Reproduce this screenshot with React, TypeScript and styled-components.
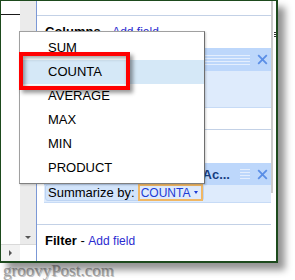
import React from "react";
import styled, { createGlobalStyle } from "styled-components";

const Global = createGlobalStyle`
  html, body { margin: 0; padding: 0; background: #fff; }
  body { font-family: "Liberation Sans", Arial, sans-serif; }
  * { box-sizing: border-box; }
`;

const Page = styled.div`
  width: 295px;
  height: 280px;
  overflow: hidden;
  background: #fff;
`;

const Window = styled.div`
  position: relative;
  width: 278px;
  height: 263px;
  border-style: solid;
  border-color: #1d4a1d;
  border-width: 1px 2px 2px 1px;
  background: #fff;
  box-shadow: 7px 7px 7px rgba(0, 0, 0, 0.42);
  display: flex;
`;

const SheetArea = styled.div`
  width: 35px;
  flex: none;
  display: flex;
  flex-direction: column;
`;

const SheetTop = styled.div`
  flex: 1;
  display: flex;
`;

const CellCol = styled.div`
  width: 19px;
  display: flex;
  flex-direction: column;
`;

const Cell = styled.div`
  height: 14px;
  border-bottom: 1px solid #1a1a1a;
`;

const VScroll = styled.div`
  width: 16px;
  background: #ebebeb;
  display: flex;
  flex-direction: column;
  justify-content: flex-end;
  align-items: center;
  padding-bottom: 5px;
`;

const DownArrow = styled.div`
  width: 0;
  height: 0;
  border-left: 3px solid transparent;
  border-right: 3px solid transparent;
  border-top: 3px solid #555;
`;

const SheetBottom = styled.div`
  height: 17px;
  border-top: 1px solid #d9d9d9;
  display: flex;
`;

const HButton = styled.div`
  width: 19px;
  background: #f2f2f2;
  display: flex;
  align-items: center;
  justify-content: center;
`;

const RightArrow = styled.div`
  width: 0;
  height: 0;
  border-top: 3px solid transparent;
  border-bottom: 3px solid transparent;
  border-left: 3px solid #555;
`;

const Corner = styled.div`
  width: 16px;
  background: #fff;
`;

const Panel = styled.div`
  width: 235px;
  flex: none;
  border-left: 1px solid #7b98d6;
  display: flex;
  flex-direction: column;
`;

const TopStrip = styled.div`
  height: 15px;
  border-bottom: 1px solid #c3d1e6;
`;

const Section = styled.div<{ $top: number; $last?: boolean }>`
  padding: ${(p) => p.$top}px 0 ${(p) => (p.$last ? 0 : 21)}px 0;
  border-bottom: ${(p) => (p.$last ? "none" : "1px solid #c3d1e6")};
`;

const SectionHeader = styled.div`
  height: 16px;
  line-height: 16px;
  padding-left: 8px;
  font-size: 13px;
  color: #000;
  white-space: nowrap;
`;

const Bold = styled.span`
  font-weight: bold;
`;

const AddField = styled.span`
  font-size: 12px;
  color: #2b2bd0;
`;

const Card = styled.div<{ $gap: number }>`
  margin: ${(p) => p.$gap}px 0 0 7px;
  display: flex;
  flex-direction: column;
`;

const CardHeader = styled.div<{ $h: number }>`
  height: ${(p) => p.$h}px;
  background: #bdd7fb;
  display: flex;
  align-items: center;
`;

const CardTitle = styled.div`
  flex: 1;
  min-width: 0;
  overflow: hidden;
  white-space: nowrap;
  text-align: right;
  padding-right: 10px;
  font-size: 13px;
  font-weight: bold;
  color: #163d80;
`;

const Grip = styled.div<{ $w: number }>`
  width: ${(p) => p.$w}px;
  flex: none;
  height: 10px;
  background: repeating-linear-gradient(
    to bottom,
    #e4eefd 0px,
    #e4eefd 1px,
    transparent 1px,
    transparent 3px
  );
`;

const CloseBtn = styled.svg`
  flex: none;
  width: 11px;
  height: 11px;
  margin: 0 3px 0 7px;
`;

const CardBody = styled.div<{ $h: number }>`
  height: ${(p) => p.$h}px;
  background: #deebfc;
  border-bottom: 1px solid #c7dbf6;
  display: flex;
  align-items: flex-start;
`;

const Pill = styled.div`
  margin-left: 1px;
  margin-top: -1px;
  height: 17px;
  display: flex;
  align-items: center;
  padding-left: 2px;
  background: #d2e4fb;
  border: 1px solid #bcd3f2;
  border-radius: 3px;
  font-size: 13px;
  color: #000;
  white-space: nowrap;
`;

const SelectBox = styled.div`
  margin-left: 3px;
  width: 65px;
  height: 17px;
  display: flex;
  align-items: center;
  justify-content: space-between;
  padding: 0 3px 0 1px;
  border: 2px solid #f0b764;
  background: #dfeafb;
  color: #1c3bd6;
  font-size: 12px;
`;

const SelectArrow = styled.div`
  width: 0;
  height: 0;
  border-left: 2.5px solid transparent;
  border-right: 2.5px solid transparent;
  border-top: 3px solid #1c3bd6;
`;

const Rail = styled.div`
  width: 5px;
  flex: none;
  display: flex;
  flex-direction: column;
`;

const RailTrack = styled.div`
  height: 192px;
  border-left: 2px solid #cbcbcb;
  padding: 31px 0 0 1px;
`;

const RailMark = styled.div`
  width: 2px;
  height: 5px;
  background: repeating-linear-gradient(
    to bottom,
    #333 0px,
    #333 1px,
    transparent 1px,
    transparent 2px
  );
`;

const Menu = styled.div`
  position: absolute;
  left: 18px;
  top: 30px;
  width: 186px;
  height: 153px;
  padding: 4px 0 3px 0;
  background: #fff;
  border: 1px solid #a0a0a0;
  border-right-color: #6e6e6e;
  border-bottom-color: #808080;
  box-shadow: 1px 1px 2px rgba(0, 0, 0, 0.2);
  display: flex;
  flex-direction: column;
`;

const MenuItem = styled.div<{ $active?: boolean }>`
  height: 24px;
  line-height: 24px;
  padding-left: 28px;
  font-size: 13px;
  color: #000;
  background: ${(p) => (p.$active ? "#d5e8f7" : "transparent")};
`;

const Highlight = styled.div`
  position: absolute;
  left: 18px;
  top: 51px;
  width: 111px;
  height: 38px;
  border: 4px solid #ff0000;
  box-shadow: inset 2px 2px 4px rgba(0, 0, 0, 0.4),
    3px 3px 4px rgba(0, 0, 0, 0.4);
  pointer-events: none;
`;

const Watermark = styled.div`
  margin-top: -1px;
  padding-left: 3px;
  height: 17px;
  line-height: 17px;
  font-family: "Liberation Serif", "Times New Roman", serif;
  font-size: 17px;
  color: #a3a3a3;
  text-shadow: 1px 1px 0 rgba(0, 0, 0, 0.25);
  white-space: nowrap;
`;

const CloseIcon = () => (
  <CloseBtn viewBox="0 0 11 11">
    <path
      d="M1.2 1.2 L9.8 9.8 M9.8 1.2 L1.2 9.8"
      stroke="#5a8ee6"
      strokeWidth="1.8"
      fill="none"
    />
  </CloseBtn>
);

const items = ["SUM", "COUNTA", "AVERAGE", "MAX", "MIN", "PRODUCT"];

export default function App() {
  return (
    <Page>
      <Global />
      <Window>
        <SheetArea>
          <SheetTop>
            <CellCol>
              <Cell />
            </CellCol>
            <VScroll>
              <DownArrow />
            </VScroll>
          </SheetTop>
          <SheetBottom>
            <HButton>
              <RightArrow />
            </HButton>
            <Corner />
          </SheetBottom>
        </SheetArea>

        <Panel>
          <TopStrip />
          <Section $top={8}>
            <SectionHeader>
              <Bold>Columns</Bold> - <AddField>Add field</AddField>
            </SectionHeader>
            <Card $gap={8}>
              <CardHeader $h={23}>
                <CardTitle />
                <Grip $w={45} />
                <CloseIcon />
              </CardHeader>
              <CardBody $h={37} />
            </Card>
          </Section>
          <Section $top={9}>
            <SectionHeader />
            <Card $gap={8}>
              <CardHeader $h={22}>
                <CardTitle>Ac...</CardTitle>
                <Grip $w={10} />
                <CloseIcon />
              </CardHeader>
              <CardBody $h={18}>
                <Pill>
                  Summarize by:
                  <SelectBox>
                    COUNTA
                    <SelectArrow />
                  </SelectBox>
                </Pill>
              </CardBody>
            </Card>
          </Section>
          <Section $top={8} $last>
            <SectionHeader>
              <Bold>Filter</Bold> - <AddField>Add field</AddField>
            </SectionHeader>
          </Section>
        </Panel>

        <Rail>
          <RailTrack>
            <RailMark />
          </RailTrack>
        </Rail>

        <Menu>
          {items.map((it) => (
            <MenuItem key={it} $active={it === "COUNTA"}>
              {it}
            </MenuItem>
          ))}
        </Menu>
        <Highlight />
      </Window>
      <Watermark>groovyPost.com</Watermark>
    </Page>
  );
}
